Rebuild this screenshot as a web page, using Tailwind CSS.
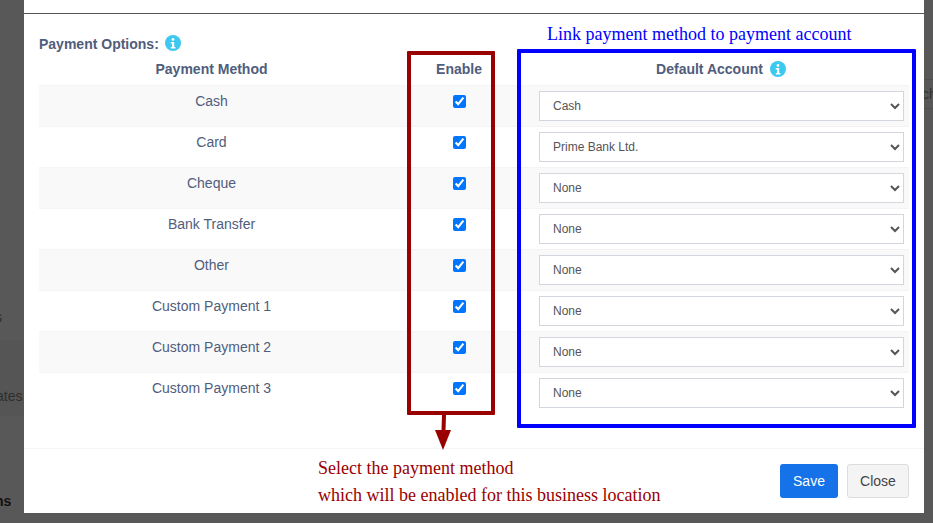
<!DOCTYPE html>
<html>
<head>
<meta charset="utf-8">
<script src="https://cdn.jsdelivr.net/npm/@tailwindcss/browser@4"></script>
</head>
<body class="m-0 overflow-hidden">
<div class="relative w-[933px] h-[523px] overflow-hidden bg-[#585858] font-['Liberation_Sans',Arial,sans-serif]">
  <div class="absolute left-0 top-[340px] w-[24px] h-[76px] bg-[#555]"></div>
  <span class="absolute left-[-5px] top-[309px] text-[14px] leading-4 text-[#2e2e2e]">s</span>
  <span class="absolute left-[-4px] top-[388px] text-[14px] leading-4 text-[#2e2e2e]">ates</span>
  <span class="absolute left-[-5px] top-[493px] text-[14px] leading-4 font-bold text-[#111]">ns</span>
  <div class="absolute left-[924px] top-[79px] w-[9px] h-[30px] border-y border-[#4f4f4f] text-[14px] text-[#333] overflow-hidden leading-7"><span class="block -ml-[2px]">ch</span></div>

  <div class="absolute left-[24px] top-0 w-[900px] h-[513px] bg-white flex flex-col">
    <div class="h-[14px] border-b border-[#555] shrink-0"></div>
    <div class="h-[434px] shrink-0 px-[15px] pt-[21px] text-[14px] text-[#505d7c]">
      <div class="flex items-center h-[18px] font-bold">
        <span>Payment Options:</span>
        <svg class="ml-[6px] mb-[2px] w-[16px] h-[16px]" viewBox="0 0 16 16"><circle cx="8" cy="8" r="8" fill="#3dc9ef"/><circle cx="8" cy="4.4" r="1.4" fill="#fff"/><path d="M5.8 7h3.4v5h1.2v1.4H5.8V12h1.2V8.4H5.8z" fill="#fff"/></svg>
      </div>
      <div class="flex h-[27px] items-center font-bold mt-[3px] mb-[2px]">
        <div class="w-[345px] text-center">Payment Method</div>
        <div class="w-[150px] text-center">Enable</div>
        <div class="flex-1 flex items-center justify-center pr-[1px]">
          <span>Default Account</span>
          <svg class="ml-[7px] mb-[2px] w-[16px] h-[16px]" viewBox="0 0 16 16"><circle cx="8" cy="8" r="8" fill="#3dc9ef"/><circle cx="8" cy="4.4" r="1.4" fill="#fff"/><path d="M5.8 7h3.4v5h1.2v1.4H5.8V12h1.2V8.4H5.8z" fill="#fff"/></svg>
        </div>
      </div>

      <div class="flex h-[41px] bg-[#f9f9f9] border-t border-[#f4f4f4]">
        <div class="w-[345px] text-center pt-[7px] leading-[16px]">Cash</div>
        <div class="w-[150px] flex justify-center pt-[9px]"><input type="checkbox" checked class="w-[13px] h-[13px]"></div>
        <div class="flex-1 pl-[5px] pr-[5px] pt-[5px]"><select class="w-full h-[30px] border border-[#d2d6de] bg-white text-[12px] text-[#555] pl-[9px]"><option>Cash</option></select></div>
      </div>
      <div class="flex h-[41px] border-t border-[#f4f4f4]">
        <div class="w-[345px] text-center pt-[7px] leading-[16px]">Card</div>
        <div class="w-[150px] flex justify-center pt-[9px]"><input type="checkbox" checked class="w-[13px] h-[13px]"></div>
        <div class="flex-1 pl-[5px] pr-[5px] pt-[5px]"><select class="w-full h-[30px] border border-[#d2d6de] bg-white text-[12px] text-[#555] pl-[9px]"><option>Prime Bank Ltd.</option></select></div>
      </div>
      <div class="flex h-[41px] bg-[#f9f9f9] border-t border-[#f4f4f4]">
        <div class="w-[345px] text-center pt-[7px] leading-[16px]">Cheque</div>
        <div class="w-[150px] flex justify-center pt-[9px]"><input type="checkbox" checked class="w-[13px] h-[13px]"></div>
        <div class="flex-1 pl-[5px] pr-[5px] pt-[5px]"><select class="w-full h-[30px] border border-[#d2d6de] bg-white text-[12px] text-[#555] pl-[9px]"><option>None</option></select></div>
      </div>
      <div class="flex h-[41px] border-t border-[#f4f4f4]">
        <div class="w-[345px] text-center pt-[7px] leading-[16px]">Bank Transfer</div>
        <div class="w-[150px] flex justify-center pt-[9px]"><input type="checkbox" checked class="w-[13px] h-[13px]"></div>
        <div class="flex-1 pl-[5px] pr-[5px] pt-[5px]"><select class="w-full h-[30px] border border-[#d2d6de] bg-white text-[12px] text-[#555] pl-[9px]"><option>None</option></select></div>
      </div>
      <div class="flex h-[41px] bg-[#f9f9f9] border-t border-[#f4f4f4]">
        <div class="w-[345px] text-center pt-[7px] leading-[16px]">Other</div>
        <div class="w-[150px] flex justify-center pt-[9px]"><input type="checkbox" checked class="w-[13px] h-[13px]"></div>
        <div class="flex-1 pl-[5px] pr-[5px] pt-[5px]"><select class="w-full h-[30px] border border-[#d2d6de] bg-white text-[12px] text-[#555] pl-[9px]"><option>None</option></select></div>
      </div>
      <div class="flex h-[41px] border-t border-[#f4f4f4]">
        <div class="w-[345px] text-center pt-[7px] leading-[16px]">Custom Payment 1</div>
        <div class="w-[150px] flex justify-center pt-[9px]"><input type="checkbox" checked class="w-[13px] h-[13px]"></div>
        <div class="flex-1 pl-[5px] pr-[5px] pt-[5px]"><select class="w-full h-[30px] border border-[#d2d6de] bg-white text-[12px] text-[#555] pl-[9px]"><option>None</option></select></div>
      </div>
      <div class="flex h-[41px] bg-[#f9f9f9] border-t border-[#f4f4f4]">
        <div class="w-[345px] text-center pt-[7px] leading-[16px]">Custom Payment 2</div>
        <div class="w-[150px] flex justify-center pt-[9px]"><input type="checkbox" checked class="w-[13px] h-[13px]"></div>
        <div class="flex-1 pl-[5px] pr-[5px] pt-[5px]"><select class="w-full h-[30px] border border-[#d2d6de] bg-white text-[12px] text-[#555] pl-[9px]"><option>None</option></select></div>
      </div>
      <div class="flex h-[41px] border-t border-[#f4f4f4]">
        <div class="w-[345px] text-center pt-[7px] leading-[16px]">Custom Payment 3</div>
        <div class="w-[150px] flex justify-center pt-[9px]"><input type="checkbox" checked class="w-[13px] h-[13px]"></div>
        <div class="flex-1 pl-[5px] pr-[5px] pt-[5px]"><select class="w-full h-[30px] border border-[#d2d6de] bg-white text-[12px] text-[#555] pl-[9px]"><option>None</option></select></div>
      </div>
    </div>
    <div class="flex-1 border-t border-[#f4f4f4] flex justify-end items-start pt-[15px] pr-[15px] gap-[9px]">
      <button class="w-[58px] h-[34px] rounded-[3px] bg-[#1572e8] text-white text-[14px]">Save</button>
      <button class="w-[62px] h-[34px] rounded-[3px] bg-[#f4f4f4] border border-[#ddd] text-[#444] text-[14px]">Close</button>
    </div>
  </div>

  <!-- annotations painted over the screenshot -->
  <div class="absolute left-[407px] top-[51px] w-[88px] h-[364px] border-[4px] border-[#990000] rounded-[1px]"></div>
  <div class="absolute left-[517px] top-[49px] w-[399px] h-[379px] border-[4px] border-[#0000ff] rounded-[1px]"></div>
  <svg class="absolute left-[430px] top-[414px] w-[28px] h-[38px]" viewBox="0 0 28 38"><path d="M14 0L13.5 17" stroke="#990000" stroke-width="4" fill="none"/><path d="M5 16L21 16L13 36z" fill="#990000"/></svg>
  <div class="absolute left-[547px] top-[24px] text-[18px] leading-[21px] text-[#0000ff] font-['Liberation_Serif',serif] whitespace-nowrap">Link payment method to payment account</div>
  <div class="absolute left-[318px] top-[455px] text-[18px] leading-[27px] text-[#990000] font-['Liberation_Serif',serif] whitespace-nowrap">Select the payment method<br>which will be enabled for this business location</div>
</div>
</body>
</html>
